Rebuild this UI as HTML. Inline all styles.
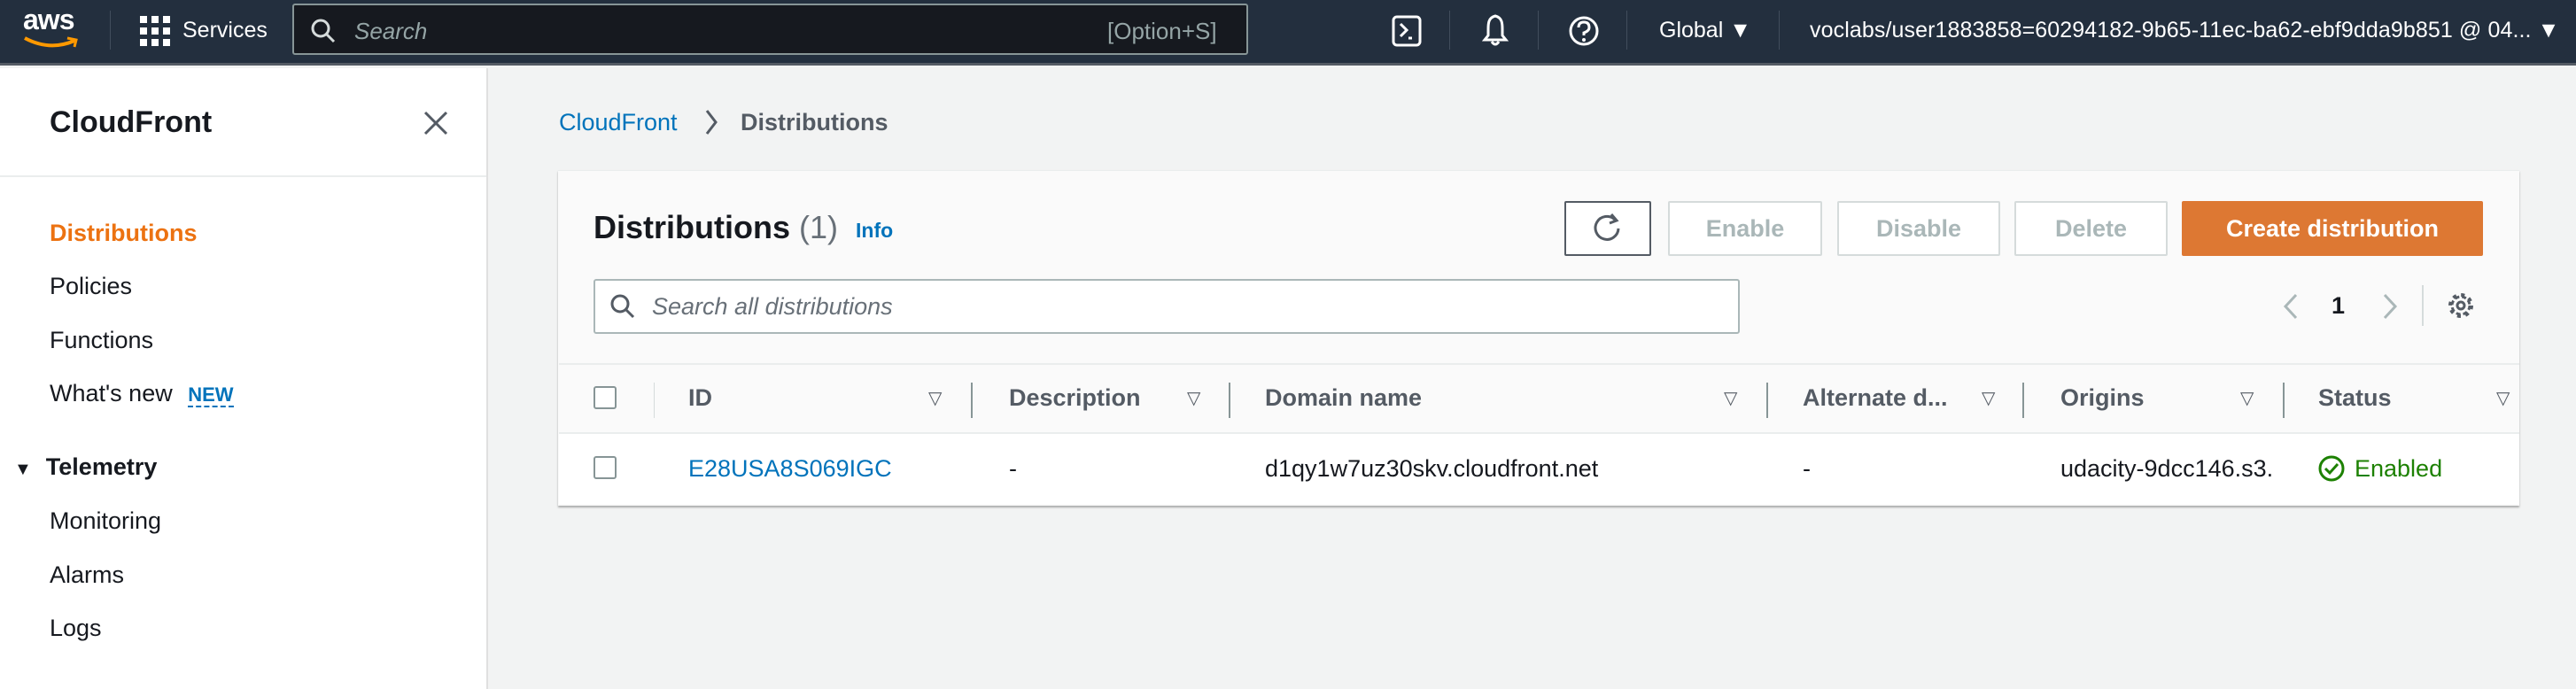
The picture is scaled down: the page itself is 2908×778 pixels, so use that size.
<!DOCTYPE html>
<html><head><meta charset="utf-8"><style>
*{box-sizing:border-box;margin:0;padding:0}
body{width:2908px;height:778px;overflow:hidden;background:#f2f3f3;font-family:"Liberation Sans",sans-serif;color:#16191f;position:relative}
.a{position:absolute;white-space:nowrap}
#top{position:absolute;left:0;top:0;width:2908px;height:74px;background:#232f3e;border-bottom:3px solid #545b64}
.vd{position:absolute;top:12px;width:1px;height:44px;background:#414d5c}
#side{position:absolute;left:0;top:77px;width:551px;height:701px;background:#fff;border-right:2px solid #e0e0e0}
.nav{font-size:27px;color:#16191f;left:56px}
#panel{position:absolute;left:630px;top:192px;width:2214px;height:379px;background:#fafafa;box-shadow:0 2px 2px rgba(0,0,0,.3);border-top:1px solid #eaeded}
.btn{position:absolute;top:227px;height:62px;border:2px solid #d5dbdb;background:#fff;border-radius:2px;color:#aab7b8;font-weight:bold;font-size:27px;text-align:center;line-height:58px}
.th{font-size:27px;font-weight:bold;color:#545b64;top:434px}
.tri{font-size:20px;color:#545b64;top:437px}
.cd{position:absolute;top:432px;width:2px;height:40px;background:#879596}
.td{font-size:27px;top:514px}
.cb{position:absolute;left:670px;width:26px;height:26px;border:2px solid #879596;border-radius:3px;background:#fff}
</style></head><body>
<div id="top">
 <div class="a" style="left:26px;top:4px;color:#fff;font-size:32px;font-weight:bold;letter-spacing:-1px">aws</div>
 <svg class="a" style="left:26px;top:40px" width="68" height="16"><path d="M2 3 Q30 18 58 6" stroke="#ff9900" stroke-width="4" fill="none"/><path d="M50 3 L60 5 L58 13" stroke="#ff9900" stroke-width="3" fill="none"/></svg>
 <div class="vd" style="left:124px"></div>
 <svg class="a" style="left:158px;top:18px" width="36" height="36"><g fill="#fff"><rect x="0" y="0" width="8" height="8"/><rect x="13" y="0" width="8" height="8"/><rect x="26" y="0" width="8" height="8"/><rect x="0" y="13" width="8" height="8"/><rect x="13" y="13" width="8" height="8"/><rect x="26" y="13" width="8" height="8"/><rect x="0" y="26" width="8" height="8"/><rect x="13" y="26" width="8" height="8"/><rect x="26" y="26" width="8" height="8"/></g></svg>
 <div class="a" style="left:206px;top:20px;color:#fff;font-size:25px">Services</div>
 <div class="a" style="left:330px;top:4px;width:1079px;height:58px;background:#16191f;border:2px solid #879596;border-radius:3px"></div>
 <svg class="a" style="left:350px;top:20px" width="30" height="30"><circle cx="12" cy="12" r="9" stroke="#d5dbdb" stroke-width="3" fill="none"/><path d="M19 19 L27 27" stroke="#d5dbdb" stroke-width="3"/></svg>
 <div class="a" style="left:400px;top:20px;color:#95a5a6;font-size:26px;font-style:italic">Search</div>
 <div class="a" style="left:1250px;top:20px;color:#95a5a6;font-size:26px">[Option+S]</div>
 <svg class="a" style="left:1570px;top:17px" width="36" height="36"><rect x="3" y="2" width="30" height="32" rx="4" stroke="#fff" stroke-width="3" fill="none"/><path d="M11 10 L18 17 L11 24 M20 26 H24" stroke="#fff" stroke-width="3" fill="none"/></svg>
 <div class="vd" style="left:1636px"></div>
 <svg class="a" style="left:1670px;top:15px" width="36" height="40"><path d="M18 3 C10 5 10 12 10 18 L10 25 L6 30 H30 L26 25 L26 18 C26 12 26 5 18 3Z M14 32 Q18 38 22 32" stroke="#fff" stroke-width="3" fill="none"/></svg>
 <div class="vd" style="left:1736px"></div>
 <svg class="a" style="left:1770px;top:17px" width="36" height="36"><circle cx="18" cy="18" r="15" stroke="#fff" stroke-width="3" fill="none"/><path d="M12 14 Q12 8 18 8 Q24 8 24 14 Q24 18 18 20 V23" stroke="#fff" stroke-width="3" fill="none"/><circle cx="18" cy="28" r="2" fill="#fff"/></svg>
 <div class="vd" style="left:1836px"></div>
 <div class="a" style="left:1873px;top:20px;color:#fff;font-size:25px">Global ▼</div>
 <div class="vd" style="left:2008px"></div>
 <div class="a" style="left:2043px;top:20px;color:#fff;font-size:25px;letter-spacing:0.1px">voclabs/user1883858=60294182-9b65-11ec-ba62-ebf9dda9b851 @ 04... ▼</div>
</div>
<div id="side">
 <div class="a" style="left:56px;top:42px;font-size:34px;font-weight:bold">CloudFront</div>
 <svg class="a" style="left:478px;top:48px" width="28" height="28"><path d="M2 2 L26 26 M26 2 L2 26" stroke="#545b64" stroke-width="3"/></svg>
 <div class="a" style="left:0;top:121px;width:549px;height:2px;background:#eaeded"></div>
 <div class="a nav" style="top:171px;color:#ec7211;font-weight:bold">Distributions</div>
 <div class="a nav" style="top:231px">Policies</div>
 <div class="a nav" style="top:292px">Functions</div>
 <div class="a nav" style="top:352px">What's new <span style="color:#0073bb;font-weight:bold;font-size:22px;border-bottom:2px dashed #0073bb;margin-left:10px">NEW</span></div>
 <div class="a nav" style="left:16px;top:435px;font-weight:bold"><span style="font-size:20px;margin-right:16px">▼</span>Telemetry</div>
 <div class="a nav" style="top:496px">Monitoring</div>
 <div class="a nav" style="top:557px">Alarms</div>
 <div class="a nav" style="top:617px">Logs</div>
</div>
<div class="a" style="left:631px;top:123px;font-size:27px;color:#0073bb">CloudFront</div>
<svg class="a" style="left:794px;top:122px" width="20" height="32"><path d="M4 3 L14 16 L4 29" stroke="#545b64" stroke-width="3" fill="none"/></svg>
<div class="a" style="left:836px;top:123px;font-size:27px;color:#545b64;font-weight:bold">Distributions</div>
<div id="panel"></div>
<div class="a" style="left:670px;top:236px;font-size:36px;font-weight:bold">Distributions <span style="font-weight:normal;color:#687078">(1)</span></div>
<div class="a" style="left:966px;top:247px;font-size:23px;font-weight:bold;color:#0073bb">Info</div>
<div class="btn" style="left:1766px;width:98px;border-color:#545b64"><svg width="40" height="40" style="margin-top:9px"><path d="M28 10 A13 13 0 1 0 32 20" stroke="#545b64" stroke-width="3" fill="none"/><path d="M24 4 L30 11 L22 14" stroke="#545b64" stroke-width="3" fill="none"/></svg></div>
<div class="btn" style="left:1883px;width:174px">Enable</div>
<div class="btn" style="left:2074px;width:184px">Disable</div>
<div class="btn" style="left:2274px;width:173px">Delete</div>
<div class="btn" style="left:2463px;width:340px;background:#dd7833;border-color:#dd7833;color:#fff">Create distribution</div>
<div class="a" style="left:670px;top:315px;width:1294px;height:62px;border:2px solid #aab7b8;border-radius:3px;background:#fff"></div>
<svg class="a" style="left:688px;top:331px" width="30" height="30"><circle cx="12" cy="12" r="9" stroke="#545b64" stroke-width="3" fill="none"/><path d="M19 19 L27 27" stroke="#545b64" stroke-width="3"/></svg>
<div class="a" style="left:736px;top:331px;font-size:27px;font-style:italic;color:#687078">Search all distributions</div>
<svg class="a" style="left:2574px;top:330px" width="24" height="32"><path d="M18 3 L6 16 L18 29" stroke="#aab7b8" stroke-width="3" fill="none"/></svg>
<div class="a" style="left:2632px;top:330px;font-size:27px;font-weight:bold">1</div>
<svg class="a" style="left:2686px;top:330px" width="24" height="32"><path d="M6 3 L18 16 L6 29" stroke="#aab7b8" stroke-width="3" fill="none"/></svg>
<div class="a" style="left:2734px;top:322px;width:2px;height:46px;background:#d5dbdb"></div>
<svg class="a" style="left:2761px;top:328px" width="34" height="34" viewBox="0 0 34 34"><circle cx="17" cy="17" r="10" stroke="#545b64" stroke-width="3" fill="none" stroke-dasharray="5 3"/><circle cx="17" cy="17" r="12" stroke="#545b64" stroke-width="4" fill="none" stroke-dasharray="4 5.4"/><circle cx="17" cy="17" r="4" stroke="#545b64" stroke-width="3" fill="none"/></svg>
<div class="a" style="left:631px;top:410px;width:2213px;height:2px;background:#eaeded"></div>
<div class="a" style="left:631px;top:412px;width:2213px;height:76px;background:#fafafa"></div>
<div class="a" style="left:631px;top:488px;width:2213px;height:2px;background:#eaeded"></div>
<div class="a" style="left:631px;top:490px;width:2213px;height:79px;background:#fff"></div>
<div class="cb" style="top:436px"></div>
<div class="cb" style="top:515px"></div>
<div class="a" style="left:738px;top:432px;width:1px;height:40px;background:#d5dbdb"></div>
<div class="a th" style="left:777px">ID</div><div class="a tri" style="left:1048px">▽</div><div class="cd" style="left:1096px"></div>
<div class="a th" style="left:1139px">Description</div><div class="a tri" style="left:1340px">▽</div><div class="cd" style="left:1387px"></div>
<div class="a th" style="left:1428px">Domain name</div><div class="a tri" style="left:1946px">▽</div><div class="cd" style="left:1994px"></div>
<div class="a th" style="left:2035px">Alternate d...</div><div class="a tri" style="left:2237px">▽</div><div class="cd" style="left:2283px"></div>
<div class="a th" style="left:2326px">Origins</div><div class="a tri" style="left:2529px">▽</div><div class="cd" style="left:2577px"></div>
<div class="a th" style="left:2617px">Status</div><div class="a tri" style="left:2818px">▽</div>
<div class="a td" style="left:777px;color:#0073bb">E28USA8S069IGC</div>
<div class="a td" style="left:1139px">-</div>
<div class="a td" style="left:1428px">d1qy1w7uz30skv.cloudfront.net</div>
<div class="a td" style="left:2035px">-</div>
<div class="a td" style="left:2326px;width:250px;overflow:hidden">udacity-9dcc146.s3.</div>
<svg class="a" style="left:2616px;top:513px" width="32" height="32"><circle cx="16" cy="16" r="13" stroke="#1d8102" stroke-width="3" fill="none"/><path d="M9 16 L14 21 L23 11" stroke="#1d8102" stroke-width="3" fill="none"/></svg>
<div class="a td" style="left:2658px;color:#1d8102">Enabled</div>
</body></html>
